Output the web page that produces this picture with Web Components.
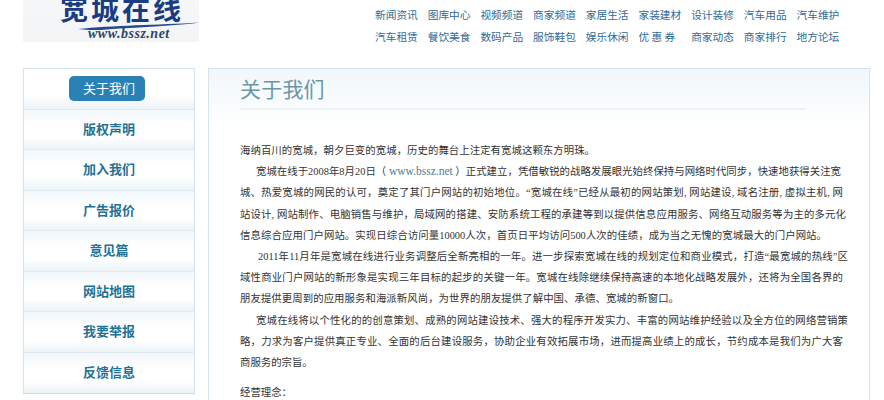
<!DOCTYPE html>
<html lang="zh">
<head>
<meta charset="utf-8">
<title>关于我们</title>
<style>
  html, body { margin: 0; padding: 0; background: #fff; overflow: hidden; height: 400px; }
  body { font-family: "Noto Sans CJK SC", sans-serif; }
</style>
</head>
<body>
<site-header></site-header>
<page-layout>
  <side-menu slot="side">
    <side-item active>关于我们</side-item>
    <side-item>版权声明</side-item>
    <side-item>加入我们</side-item>
    <side-item>广告报价</side-item>
    <side-item>意见篇</side-item>
    <side-item>网站地图</side-item>
    <side-item>我要举报</side-item>
    <side-item>反馈信息</side-item>
  </side-menu>
  <content-panel slot="main" heading="关于我们">
    <p style="width:355px">海纳百川的宽城，朝夕巨变的宽城，历史的舞台上注定有宽城这颗东方明珠。</p>
    <p class="in" style="width:601px">宽城在线于2008年8月20日（ <a>www.bssz.net</a> ）正式建立，凭借敏锐的战略发展眼光始终保持与网络时代同步，快速地获得关注宽</p>
    <p style="width:603px">城、热爱宽城的网民的认可，奠定了其门户网站的初始地位。“宽城在线”已经从最初的网站策划, 网站建设, 域名注册, 虚拟主机, 网</p>
    <p style="width:606px">站设计, 网站制作、电脑销售与维护，局域网的搭建、安防系统工程的承建等到以提供信息应用服务、网络互动服务等为主的多元化</p>
    <p style="width:587px">信息综合应用门户网站。实现日综合访问量10000人次，首页日平均访问500人次的佳绩，成为当之无愧的宽城最大的门户网站。</p>
    <p class="in wide" style="width:608px">2011年11月年是宽城在线进行业务调整后全新亮相的一年。进一步探索宽城在线的规划定位和商业模式，打造“最宽城的热线”区</p>
    <p style="width:603px">域性商业门户网站的新形象是实现三年目标的起步的关键一年。宽城在线除继续保持高速的本地化战略发展外，还将为全国各界的</p>
    <p style="width:439px">朋友提供更周到的应用服务和海派新风尚，为世界的朋友提供了解中国、承德、宽城的新窗口。</p>
    <p class="in" style="width:608px">宽城在线将以个性化的的创意策划、成熟的网站建设技术、强大的程序开发实力、丰富的网站维护经验以及全方位的网络营销策</p>
    <p style="width:603px">略，力求为客户提供真正专业、全面的后台建设服务，协助企业有效拓展市场，进而提高业绩上的成长，节约成本是我们为广大客</p>
    <p style="width:68px">商服务的宗旨。</p>
    <p class="gap" style="width:52px">经营理念：</p>
  </content-panel>
</page-layout>

<script>
'use strict';

const NAV_ITEMS = [
  '新闻资讯', '图库中心', '视频频道', '商家频道', '家居生活', '家装建材', '设计装修', '汽车用品', '汽车维护',
  '汽车租赁', '餐饮美食', '数码产品', '服饰鞋包', '娱乐休闲', '优 惠 券', '商家动态', '商家排行', '地方论坛'
];

class SiteHeader extends HTMLElement {
  connectedCallback() {
    let links = NAV_ITEMS.map(t => `<a>${t}</a>`).join('');
    this.attachShadow({mode: 'open'});
    this.shadowRoot.innerHTML = `
      <style>
        :host { display: flex; height: 68px; padding-left: 23px; box-sizing: border-box; font-family: "Noto Sans CJK SC", sans-serif; }
        .logo {
          position: relative;
          width: 176px;
          height: 42px;
          overflow: hidden;
          background: linear-gradient(#f6f7f8, #f3f4f6);
        }
        .name {
          display: block;
          height: 26px;
          margin: -9px 0 0 37px;
          font-size: 28px;
          line-height: 34px;
          font-weight: 700;
          letter-spacing: 3px;
          white-space: nowrap;
          color: #1a3c80;
        }
        .url {
          position: absolute;
          left: 65px;
          top: 26px;
          font: italic bold 14px/16px "Liberation Serif", serif;
          letter-spacing: .5px;
          color: #2a4468;
        }
        svg { position: absolute; left: 0; top: 0; }
        nav {
          display: grid;
          grid-template-columns: repeat(9, 52.7px);
          grid-auto-rows: 22px;
          margin: 4px 0 0 176px;
          align-items: center;
        }
        a { font-size: 10.7px; line-height: 22px; color: #2f6a96; white-space: nowrap; }
      </style>
      <div class="logo">
        <span class="name">宽城在线</span>
        <svg width="176" height="42" viewBox="0 0 176 42">
          <path d="M55 29 C90 25 140 25 182 22 C140 27 110 27 78 30 C70 30 62 30 55 29Z" fill="#24498c"/>
        </svg>
        <span class="url">www.bssz.net</span>
      </div>
      <nav>${links}</nav>
    `;
  }
}

class PageLayout extends HTMLElement {
  constructor() {
    super();
    this.attachShadow({mode: 'open'});
    this.shadowRoot.innerHTML = `
      <style>
        :host { display: grid; grid-template-columns: 172px 662px; column-gap: 13px; padding-left: 23px; align-items: start; }
      </style>
      <slot name="side"></slot>
      <slot name="main"></slot>
    `;
  }
}

class SideMenu extends HTMLElement {
  constructor() {
    super();
    this.attachShadow({mode: 'open'});
    this.shadowRoot.innerHTML = `
      <style>
        :host { display: flex; flex-direction: column; box-sizing: border-box; width: 172px; border: 1px solid #d5e3ea; border-bottom-color: #c9dbe4; }
      </style>
      <slot></slot>
    `;
  }
}

class SideItem extends HTMLElement {
  constructor() {
    super();
    this.attachShadow({mode: 'open'});
    this.shadowRoot.innerHTML = `
      <style>
        :host {
          display: flex;
          align-items: center;
          justify-content: center;
          box-sizing: border-box;
          height: 40.5px;
          padding-bottom: 1px;
          border-bottom: 1px solid #dfeaf0;
          background: linear-gradient(#f1f7fa, #fff 40%, #fff 70%, #ebf3f7);
          font: 700 13px/18px "Noto Sans CJK SC", sans-serif;
          color: #1f7296;
        }
        :host(:last-child) { border-bottom: 0; }
        :host([active]) { background: linear-gradient(#fff, #fff 65%, #edf4f8); font-weight: 400; color: #fff; padding-bottom: 2px; }
        span { display: block; }
        :host([active]) span {
          width: 72px;
          height: 25px;
          margin: 2px 4px 0 0;
          padding-left: 4px;
          line-height: 24px;
          text-align: center;
          border-radius: 5px;
          background: #2a81b5;
        }
      </style>
      <span><slot></slot></span>
    `;
  }
}

class ContentPanel extends HTMLElement {
  connectedCallback() {
    let heading = this.getAttribute('heading') || '';
    let tpl = document.getElementById('panel-style');
    this.attachShadow({mode: 'open'});
    this.shadowRoot.appendChild(tpl.content.cloneNode(true));
    this.shadowRoot.querySelector('h1').textContent = heading;
    // the copy is kept in the shadow root so its <p> rules apply
    this.shadowRoot.querySelector('.copy').append(...this.children);
  }
}

customElements.define('site-header', SiteHeader);
customElements.define('page-layout', PageLayout);
customElements.define('side-menu', SideMenu);
customElements.define('side-item', SideItem);
</script>

<template id="panel-style">
  <style>
    :host {
      display: block;
      box-sizing: border-box;
      height: 340px;
      padding: 4px 0 0 31px;
      border: 1px solid #d5e3ea;
      border-bottom: 0;
      background: linear-gradient(#f1f7fb, #fff 60px);
      font-family: "Noto Sans CJK SC", sans-serif;
    }
    h1 {
      width: 566px;
      height: 35px;
      margin: 0;
      font-size: 21px;
      line-height: 30px;
      font-weight: 400;
      letter-spacing: .2px;
      color: #6a97a5;
      border-bottom: 2px solid #eef2f4;
    }
    .copy { padding-top: 30px; }
    p {
      margin: 0;
      font-family: "Liberation Serif", "Noto Sans CJK SC", sans-serif;
      font-size: 10.4px;
      line-height: 21.2px;
      color: #333;
      white-space: nowrap;
      text-align: justify;
      text-align-last: justify;
    }
    p.in { text-indent: 16px; }
    p.wide { text-indent: 18px; }
    p.gap { margin-top: 9px; }
    a { font-size: 11.5px; color: #4a7d97; }
  </style>
  <h1></h1>
  <div class="copy"></div>
</template>
<script>
customElements.define('content-panel', ContentPanel);
</script>
</body>
</html>
